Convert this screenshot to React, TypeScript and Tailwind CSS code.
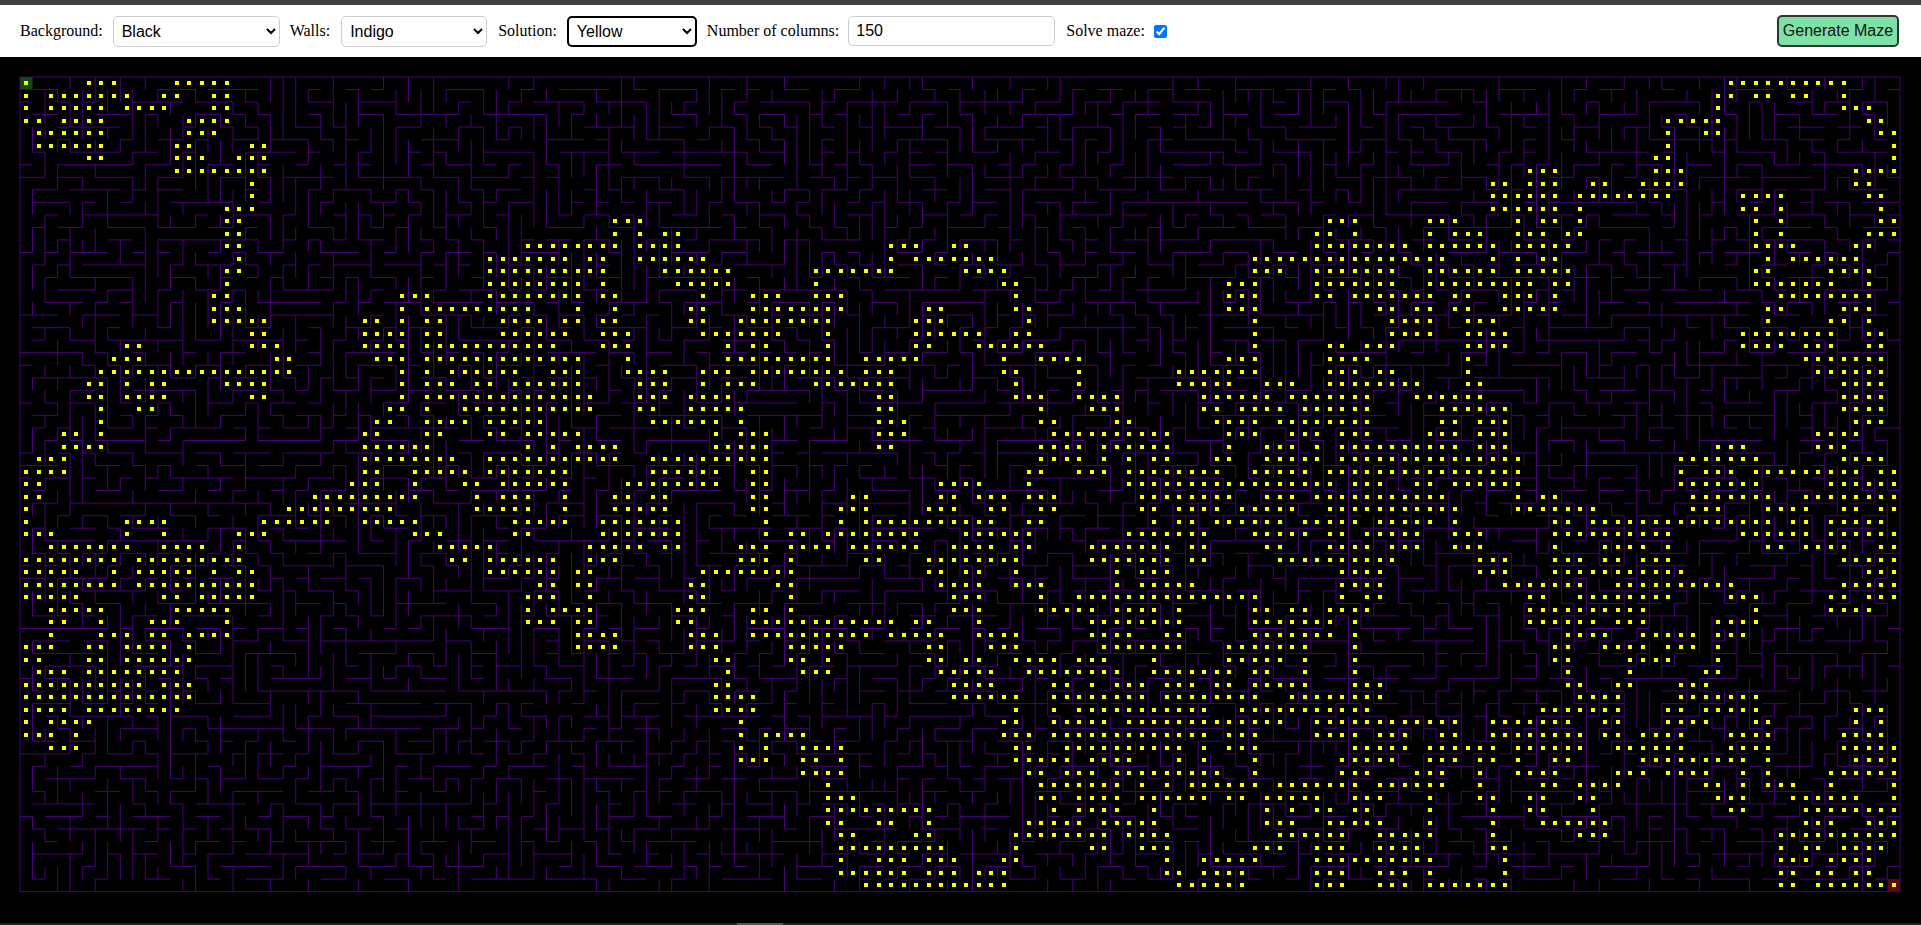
const COLS = 150;
const ROWS = 65;
const CELL = 12.533;
const PAD = 1;

// solution cells per row, as column ranges
const SOLUTION = [
  "0,5-7,12-16,136-145",
  "0,2-8,11-12,15-16,135-136,138-139,141-142,145",
  "0,2-6,8-11,15-16,135,145-147",
  "0-1,3-6,13-16,131-135,147-148",
  "1-6,13-15,131,134-135,148-149",
  "1-6,12-13,18-19,131,149",
  "5-6,12-14,17-19,130-131,149",
  "12-19,120-122,130-132,146-149",
  "18,117-118,120-122,125-126,129-132,146-147",
  "18,117-122,124-131,137-140,147-148",
  "16-18,117-122,124,137-138,140,148",
  "16-17,47-49,104-106,112-114,119,121-122,124,138,140,148-149",
  "16-17,47,49,51-52,103-104,106,112,114-116,119-121,123-124,138,140,147-149",
  "16-17,40-47,49-52,69-71,74-75,103-110,112-117,119-123,138-141,146-147",
  "17,37-43,45-46,49-54,69,71-77,98-113,117,119,121-122,139,141-146",
  "16-17,37-46,51-56,63-69,75-78,98-100,103-109,112-117,119-123,138-139,144-147",
  "16,37-44,46,52-56,63,78-79,96-98,103-109,112-120,122-123,138-144,147",
  "15-16,30-32,37-44,46-47,54,58-60,63-65,79,96-98,103-104,106-112,114-115,118-120,122,140-147",
  "15-17,30,32-40,44,47,53-54,58-65,72-73,79-80,96-98,108-109,111-112,114-115,118-122,139-140,145-147",
  "15-19,27-28,30,32-33,38-41,43-44,46-47,53-54,57-64,71-73,80,98,109-112,115-117,139,144-145,147",
  "18-19,27-30,32-33,38-43,46-48,54-60,64,71-76,79-80,98,109-112,115-118,137-144,147-148",
  "8-9,18-20,27-30,32-42,46-48,56,58-59,64,71-72,76-81,98,104-105,107-109,115-118,137-140,142-144,147-148",
  "7-9,20-21,28-30,32-44,48,56-64,67-71,78,81-84,96-98,104-107,115,142-148",
  "6-21,30,32,34-39,42-44,48-51,54-56,58-65,67-69,78-79,84,92-98,104-106,108-109,115,143-148",
  "5-6,8,10-11,16-19,30,32-34,36-37,39-44,49-51,54,56-58,63-69,79,84,92-96,99-101,104-111,115-116,145-148",
  "5-6,8-11,18-19,30,32-45,49-51,53-56,68-69,79-81,84-87,94-99,101-107,111-116,145-148",
  "6,9-10,29-30,32,35-45,49-50,53-57,68-69,81,85-87,94-95,97-100,102-107,113-118,145-148",
  "6,28-29,32-35,37-41,50-55,57,68-70,81-82,87-88,95-98,100-107,113-114,116-118,146-148",
  "3-4,6,27-28,32-33,37-38,40-44,55,57-59,68-70,82-91,96-98,101-103,105-107,112-114,116-118,143-146",
  "3-6,27-32,40,42,44-47,55-59,68-69,81-84,86-91,96,99-101,103,105-114,116-118,135-137,143-145",
  "1-3,27-34,37-47,50-59,81-84,86,88,90-91,95-96,99-103,105-119,132-138,145-148",
  "0-3,27-28,31-35,37-43,50-55,58-59,80-81,84-86,88-95,98-102,104-119,132,134-136,138-146,148-149",
  "0-1,26-28,31,35-36,38-43,48-55,58-59,73-76,80,88-104,106-108,111-112,114-119,132-138,144-149",
  "0-1,23-31,36,38-40,43,47-48,50-51,58-59,66-67,73-74,76-78,80-82,89-96,99-101,103-113,119,121-122,133-139,142-149",
  "0,21-29,36-40,43,47-51,58-59,65-67,72-74,77-78,81-82,89-90,92-95,97-101,104-114,119-125,133-135,139-142,145-146,148-149",
  "0,8-11,19-24,27-31,39-43,46-52,59,65,67-77,80-81,90,92-93,95-100,102-106,108-112,114,122-123,125-139,141-142,144-148",
  "0-2,8,11,17-19,31-33,39-40,46-52,59,61-62,64-71,75-80,88-94,98-102,104-105,107-111,114-116,122-131,137-142,144-149",
  "2-8,11-14,17,33-37,45-49,51-52,57-59,61-64,66-71,74-77,79-80,85-91,93-94,99-100,104-107,109-111,114-116,122,126-129,131,139-140,142-145,148-149",
  "0-7,9-17,34-35,37-42,45-47,57-59,61,67-68,72-79,85-91,93-94,100-109,116-118,122-124,126-127,129-131,145-149",
  "0-4,7,9-13,15,17-18,37-42,44-45,54-61,72-73,75-76,79,87,89-91,105-108,116-118,122-132,147-149",
  "0-7,9-18,41-42,44-45,53-54,60-61,73-76,79-81,87,89-93,105-108,118-124,127-136,145-149",
  "0-4,11-12,14-18,40-42,45,53-54,61,74-76,81,84-98,105,107-108,120-121,124-131,136-138,144-145,147-149",
  "2-6,12-16,40,42-45,52-54,58-59,61,74-76,81-85,87-90,92,98-99,101-102,104-107,120-129,138,144-147",
  "2-3,6,10-12,16,40-42,44-45,52-53,58-69,71-72,76,85-92,98-104,106,120-125,127-129,135-138",
  "2,6-8,10-11,13-16,44-47,53-55,58-67,69-73,76-79,85-88,91-92,98-104,106,123-126,129-133,135-137",
  "0-2,5-6,8-11,13,44-47,53-55,61-65,72-73,77-79,86-92,96-102,106,122-123,126-129,131-133,135",
  "0-1,5-6,8-13,55-56,61-62,64,72-73,75-76,79-82,84-86,90,96-100,102,106,122-123,128-131,135",
  "1-3,5-12,56,62-64,73-77,80-87,90-96,98-99,102,106,123,128,134-135",
  "0-9,11-13,55-56,74-77,82-83,85,87-89,91-93,95-96,98-102,106-108,123-124,127-128,132-134",
  "0-13,55-58,74-79,82-89,91-98,101-108,124-127,132-138",
  "0-3,5-12,55-58,79,82,84-94,97-107,121-127,131-132,134-138,146-148",
  "0,2-5,57,78-79,82-86,88-100,103-114,117-123,126-127,131-134,138-139,146,148",
  "0-2,4,57,59-62,78-80,82-94,96-98,103-106,108-110,113-114,117-124,126-127,129-132,136-139,145-148",
  "2-4,57,59,62-65,79-80,83-92,94,96-98,106-110,112-117,119-124,127-132,136-139,145-149",
  "57-59,62-63,65,79-83,85-88,92,94,98,105-109,112-114,116-117,119,122-123,129-137,139,146-149",
  "62-65,80-81,83-85,87-95,98,105-107,111-113,116,119-122,127-129,131-134,137,139,144-149",
  "64,81-87,89,91,93-98,100-106,108-113,116,121-122,124-127,134-135,137,139-141,144,149",
  "64-66,81-82,84-87,89-94,96-97,99-103,106-108,112,116-117,120-121,124-125,135-137,141-146,149",
  "64-72,82,84-87,90,99,101,103-104,106-107,112,117,120-121,125,136-137,142-149",
  "64-65,68-69,72,80-84,86-90,99-101,104-108,112,117,121-126,142-144,147-149",
  "65-66,71-72,79-86,88-91,100-105,108-112,117,124-126,140-149",
  "65-73,79,85-86,89-91,98-100,103-105,108-111,117-118,140,142-143,145-148",
  "65,68-70,72-74,78-79,91,94-98,103-112,118,140-142,144-147",
  "65-70,72-74,76-78,91-92,94-97,103-105,108-110,112,118,140-141,143-144,146-147",
  "67-78,92-97,103-105,108-110,112-118,140-141,143-149",
];

function solutionPath() {
  let d = "";
  SOLUTION.forEach((row, r) => {
    const y = Math.round(PAD + r * CELL + CELL / 2 - 2);
    row.split(",").forEach((part) => {
      const [from, to] = part.split("-").map(Number);
      for (let c = from; c <= (to ?? from); c++) {
        const x = Math.round(PAD + c * CELL + CELL / 2 - 2);
        d += `M${x} ${y}h4v4h-4z`;
      }
    });
  });
  return d;
}

// growing tree with a fixed seed, gives longer corridors than kruskal
function wallsPath() {
  let seed = 20240611;
  const rand = () => {
    seed = (seed + 0x6d2b79f5) | 0;
    let t = Math.imul(seed ^ (seed >>> 15), 1 | seed);
    t = (t + Math.imul(t ^ (t >>> 7), 61 | t)) ^ t;
    return ((t ^ (t >>> 14)) >>> 0) / 4294967296;
  };

  const seen = new Uint8Array(COLS * ROWS);
  const openRight = new Uint8Array(COLS * ROWS);
  const openDown = new Uint8Array(COLS * ROWS);
  const active = [Math.floor(rand() * COLS * ROWS)];
  seen[active[0]] = 1;

  while (active.length) {
    const i = rand() < 0.55 ? active.length - 1 : Math.floor(rand() * active.length);
    const cell = active[i];
    const c = cell % COLS;
    const r = Math.floor(cell / COLS);
    const next: number[] = [];
    if (c > 0 && !seen[cell - 1]) next.push(cell - 1);
    if (c < COLS - 1 && !seen[cell + 1]) next.push(cell + 1);
    if (r > 0 && !seen[cell - COLS]) next.push(cell - COLS);
    if (r < ROWS - 1 && !seen[cell + COLS]) next.push(cell + COLS);
    if (!next.length) {
      active.splice(i, 1);
      continue;
    }
    const n = next[Math.floor(rand() * next.length)];
    const low = Math.min(cell, n);
    if (Math.abs(n - cell) === 1) openRight[low] = 1;
    else openDown[low] = 1;
    seen[n] = 1;
    active.push(n);
  }

  let d = `M${PAD} ${PAD}H${PAD + COLS * CELL}V${PAD + ROWS * CELL}H${PAD}Z`;
  for (let r = 0; r < ROWS; r++) {
    for (let c = 0; c < COLS; c++) {
      const cell = r * COLS + c;
      const x0 = (PAD + c * CELL).toFixed(1);
      const x1 = (PAD + (c + 1) * CELL).toFixed(1);
      const y0 = (PAD + r * CELL).toFixed(1);
      const y1 = (PAD + (r + 1) * CELL).toFixed(1);
      if (c < COLS - 1 && !openRight[cell]) d += `M${x1} ${y0}V${y1}`;
      if (r < ROWS - 1 && !openDown[cell]) d += `M${x0} ${y1}H${x1}`;
    }
  }
  return d;
}

const WALLS = wallsPath();
const DOTS = solutionPath();

function Maze() {
  const w = COLS * CELL + PAD * 2;
  const h = ROWS * CELL + PAD * 2;
  return (
    <svg width={w} height={h} viewBox={`0 0 ${w} ${h}`} className="block">
      <rect x={PAD} y={PAD} width={CELL} height={CELL} fill="#0f4d0c" />
      <rect x={PAD + (COLS - 1) * CELL} y={PAD + (ROWS - 1) * CELL} width={CELL} height={CELL} fill="#5a0b0b" />
      <path d={WALLS} fill="none" stroke="#4b0082" strokeWidth="1" />
      <path d={DOTS} fill="#ffff00" />
    </svg>
  );
}

function Dropdown({ value, options, className }: { value: string; options: string[]; className: string }) {
  return (
    <select
      defaultValue={value}
      className={`h-[31px] rounded-[5px] pl-1 text-base text-black bg-white ${className}`}
    >
      {options.map((o) => (
        <option key={o}>{o}</option>
      ))}
    </select>
  );
}

const COLORS = ["Black", "White", "Indigo", "Yellow", "Red", "Green", "Blue"];

export default function App() {
  return (
    <div className="flex h-screen flex-col overflow-hidden bg-black font-['Liberation_Sans',Arial,sans-serif]">
      <div className="h-[5px] shrink-0 bg-[#3f3f3f]" />

      <div className="flex h-[52px] shrink-0 items-center bg-white pl-5 pr-[22px] text-black">
        <label className="mr-[10px] font-['Liberation_Serif',serif] text-base">Background:</label>
        <Dropdown value="Black" options={COLORS} className="mr-[10px] w-[167px] border border-[#ccc]" />
        <label className="mr-[11px] font-['Liberation_Serif',serif] text-base">Walls:</label>
        <Dropdown value="Indigo" options={COLORS} className="mr-[11px] w-[146px] border border-[#ccc]" />
        <label className="mr-[10px] font-['Liberation_Serif',serif] text-base">Solution:</label>
        <Dropdown value="Yellow" options={COLORS} className="mr-[10px] w-[130px] border-2 border-black" />
        <label className="mr-[9px] font-['Liberation_Serif',serif] text-base">Number of columns:</label>
        <input
          type="text"
          defaultValue="150"
          className="mr-[11px] h-[30px] w-[207px] rounded-[5px] border border-[#ccc] px-[7px] text-base text-black"
        />
        <label className="mr-[9px] font-['Liberation_Serif',serif] text-base">Solve maze:</label>
        <input type="checkbox" defaultChecked className="size-[13px] accent-[#0075ff]" />
        <button className="ml-auto h-8 w-[122px] rounded-[5px] border-2 border-[#333] bg-[#7de2a6] text-base text-[#111]">
          Generate Maze
        </button>
      </div>

      <div className="min-h-0 flex-1 pl-[19px] pt-[19px]">
        <Maze />
      </div>

      <div className="flex h-[2px] shrink-0 bg-[#222]">
        <div className="ml-[737px] w-[46px] bg-[#555]" />
      </div>
    </div>
  );
}
